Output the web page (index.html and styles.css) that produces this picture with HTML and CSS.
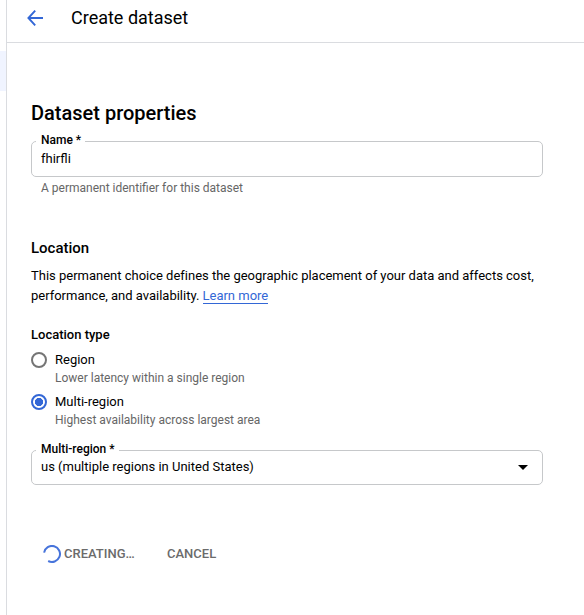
FILE: index.html
```html
<!DOCTYPE html>
<html lang="en">
<head>
<meta charset="utf-8">
<title>Create dataset</title>
<link rel="stylesheet" href="styles.css">
</head>
<body>
<div class="app">
  <nav class="rail"><div class="rail-item"></div></nav>
  <main class="panel">
    <header class="header">
      <svg class="back" width="16" height="16" viewBox="0 0 16 16"><path d="M8.2.7 1.4 8l6.8 7.3M1.4 8H16" fill="none" stroke="#3367d6" stroke-width="1.9"/></svg>
      <h1 class="title">Create dataset</h1>
    </header>
    <form class="content">
      <h2 class="heading">Dataset properties</h2>
      <fieldset class="field">
        <legend class="label">Name *</legend>
        <span class="value">fhirfli</span>
      </fieldset>
      <p class="hint">A permanent identifier for this dataset</p>
      <h3 class="subheading">Location</h3>
      <p class="description">This permanent choice defines the geographic placement of your data and affects cost,<br>performance, and availability. <a class="link">Learn more</a></p>
      <h4 class="group-title">Location type</h4>
      <div class="option">
        <span class="radio"></span>
        <div><div class="option-name">Region</div><div class="option-hint">Lower latency within a single region</div></div>
      </div>
      <div class="option">
        <span class="radio checked"></span>
        <div><div class="option-name">Multi-region</div><div class="option-hint">Highest availability across largest area</div></div>
      </div>
      <fieldset class="field select">
        <legend class="label">Multi-region *</legend>
        <span class="value">us (multiple regions in United States)</span>
        <svg class="caret" width="10" height="5" viewBox="0 0 10 5"><path d="M0 0h10L5 5z"/></svg>
      </fieldset>
      <div class="actions">
        <svg class="spinner" width="18" height="18" viewBox="0 0 18 18"><path d="M1.1 7.6A8 8 0 1 1 5.2 16" fill="none" stroke="#4774db" stroke-width="2"/></svg>
        <span class="creating">CREATING…</span>
        <span class="cancel">CANCEL</span>
      </div>
    </form>
  </main>
</div>
</body>
</html>
```
FILE: styles.css
```css
* { box-sizing: border-box; }
body {
  margin: 0;
  background: #fff;
  color: #000;
  font: 13px/20px Roboto, sans-serif;
}
h1, h2, h3, h4, p { margin: 0; font-weight: 500; }
.app { display: flex; height: 615px; overflow: hidden; }
.rail { width: 7px; border-right: 1px solid #dadce0; padding-top: 51px; }
.rail-item { height: 40px; background: #f0f4ff; }
.panel { flex: 1; }
.header {
  display: flex;
  align-items: center;
  height: 43px;
  padding: 0 0 7px 20px;
  border-bottom: 1px solid #dadce0;
}
.back { margin-right: 28px; }
.title { font-size: 18px; line-height: 24px; font-weight: 400; }
.content { padding: 58px 0 0 24px; }
.heading { font-size: 20px; line-height: 24px; margin-bottom: 8px; }
.field {
  display: flex;
  width: 512px;
  height: 44px;
  min-width: 0;
  margin: 0;
  padding: 0 14px 0 9px;
  border: 1px solid #c6c8ca;
  border-radius: 5px;
}
.label {
  margin-left: -5px;
  padding: 0 4px 2px 5px;
  font-size: 12px;
  line-height: 15px;
  font-weight: 500;
}
.value { line-height: 18px; }
.hint {
  margin-left: 10px;
  font-size: 12px;
  line-height: 16px;
  font-weight: 400;
  padding-top: 3px;
  color: #666;
}
.subheading { margin-top: 42px; font-size: 15px; line-height: 20px; }
.description { margin-top: 8px; font-weight: 400; letter-spacing: -0.008px; }
.link { color: #3367d6; border-bottom: 1px solid #3367d6; }
.group-title { margin-top: 19px; font-size: 13px; line-height: 20px; }
.option { display: flex; gap: 8px; height: 42px; }
.group-title + .option { margin-top: 5px; }
.radio {
  flex: none;
  width: 16px;
  height: 16px;
  margin-top: 2px;
  border: 2px solid #757575;
  border-radius: 50%;
}
.radio.checked {
  border-color: #3367d6;
  background: radial-gradient(circle, #3367d6 3.8px, transparent 4.4px);
}
.option-name { line-height: 20px; }
.option-hint { font-size: 12px; line-height: 16px; color: #666; }
.select { height: 43px; margin-top: 8px; justify-content: space-between; }
.select .value { line-height: 16px; }
.caret { margin-top: 6px; }
.actions {
  display: flex;
  align-items: center;
  height: 20px;
  margin: 59px 0 0 12px;
  color: #6b6b6b;
  font-weight: 500;
}
.creating { margin-left: 3px; width: 103px; }
```
